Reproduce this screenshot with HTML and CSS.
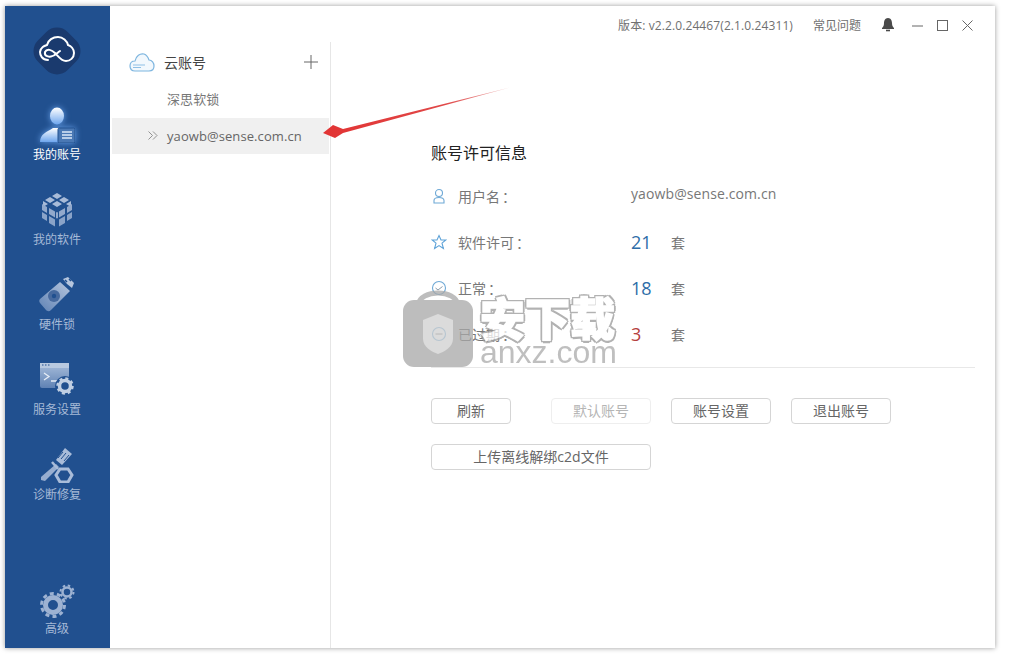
FILE: index.html
```html
<!DOCTYPE html>
<html lang="zh-CN">
<head>
<meta charset="utf-8">
<title>账号许可信息</title>
<link rel="stylesheet" href="styles.css">
</head>
<body>
<div class="window">
  <aside class="sidebar">
    <div class="logo">
      <svg width="48" height="48" viewBox="0 0 48 48"><rect x="3" y="3" width="42" height="42" rx="15" transform="rotate(45 24 24)" fill="#1a3a6e"/><path d="M15 33C9 33 7 28 7 25C8 20 11 19 14 18C15 13 20 10 25 10C30 10 34 14 35 18C38 19 41 22 41 26C41 31 37 34 33 34C28 34 25 29 22 26C19 23 14 21 12 25C11 29 15 30 18 29.500C22 29 24 26 27 24" fill="none" stroke="#fff" stroke-width="2" stroke-linecap="round"/></svg>
    </div>
    <nav class="nav">
      <a class="nav-item active">
        <svg width="36" height="36" viewBox="0 0 36 36"><defs><linearGradient id="u" x1="0" y1="0" x2="0" y2="1"><stop offset="0" stop-color="#fff"/><stop offset="1" stop-color="#6ea6ee"/></linearGradient></defs><ellipse cx="18" cy="9" rx="7" ry="8.500" fill="url(#u)"/><path d="M1 35C1 27 8 25 14 21H22L26 24V35Z" fill="url(#u)"/><rect x="19" y="21" width="17" height="15" rx="1.500" fill="#4a78b4" stroke="#21508f"/><path d="M23 25H33M23 28H33M23 31H33" stroke="#dce8f7" stroke-width="1.400"/></svg>
        <span>我的账号</span>
      </a>
      <a class="nav-item">
        <svg width="36" height="36" viewBox="0 0 36 36"><g fill="#a8bbd8"><path d="M18 1l5 3-5 3-5-3zM11 5l5 3-5 3-5-3zM25 5l5 3-5 3-5-3zM18 9l5 3-5 3-5-3zM4 9l5 3-5 3zM32 9v6l-5-3z"/><path d="M3 12l5 3v6l-5-3zM10 16l6 3.500v6L10 22zM17 20l1 .5 1-.5v6l-1 .5-1-.5zM20 19.500l6-3.500v6l-6 3.500zM28 15l5-3v6l-5 3z" fill="#92a9cc"/><path d="M3 20l5 3v6l-5-3zM10 24l6 3.500v7L10 31zM20 27.500l6-3.500v7l-6 3.500zM28 23l5-3v6l-5 3z" fill="#8aa3c8"/></g></svg>
        <span>我的软件</span>
      </a>
      <a class="nav-item">
        <svg width="36" height="36" viewBox="0 0 36 36"><defs><linearGradient id="k" x1="0" y1="1" x2="1" y2="0"><stop offset="0" stop-color="#5f82b4"/><stop offset="1" stop-color="#b6c6de"/></linearGradient></defs><path d="M1 22L21 5L31 14L12 33C10 35 8 34 7 33L1 26C0 25 0 23 1 22Z" fill="url(#k)"/><path d="M24 2L29 0L35 6L33 11L28 7Z" fill="#b6c6de"/><path d="M26 3l2 2M30 2l2 2" stroke="#21508f" stroke-width="1.500"/><circle cx="15" cy="19" r="6" fill="#46699e"/><circle cx="15" cy="19" r="2.200" fill="#21508f"/></svg>
        <span>硬件锁</span>
      </a>
      <a class="nav-item">
        <svg width="36" height="36" viewBox="0 0 36 36"><defs><linearGradient id="s" x1="0" y1="0" x2="0" y2="1"><stop offset="0" stop-color="#a9bedb"/><stop offset="1" stop-color="#5f82b4"/></linearGradient></defs><rect x="1" y="1" width="29" height="25" rx="2" fill="url(#s)"/><rect x="1" y="1" width="29" height="5" fill="#b8c9e0"/><path d="M3 3h1.500M6 3h1.500M9 3h1.500" stroke="#21508f" stroke-width="1.200"/><path d="M5 11l5 3.500-5 3.500M12 19h7" fill="none" stroke="#e6edf6" stroke-width="1.300"/><circle cx="26" cy="24" r="10" fill="#21508f"/><circle cx="26" cy="24" r="5.500" fill="none" stroke="#c0cfe3" stroke-width="3.500"/><circle cx="26" cy="24" r="7.500" fill="none" stroke="#c0cfe3" stroke-width="2.500" stroke-dasharray="3 2.900"/></svg>
        <span>服务设置</span>
      </a>
      <a class="nav-item">
        <svg width="36" height="36" viewBox="0 0 36 36"><path d="M26 1L33 7L23 18L17 13Z" fill="#a9bcd9"/><path d="M24 5l-5 6M27 6l-5 6M30 8l-5 6" stroke="#21508f"/><path d="M17 17l3 3L6 34l-4-1v-3z" fill="#98aed0"/><path d="M13 15l6 7" stroke="#a9bcd9" stroke-width="2.500"/><path d="M21 22h8l4 6-4 7h-8l-4-7z" fill="#21508f" stroke="#a9bcd9" stroke-width="3"/></svg>
        <span>诊断修复</span>
      </a>
    </nav>
    <a class="nav-item advanced">
      <svg width="36" height="36" viewBox="0 0 36 36"><circle cx="14" cy="22" r="7.500" fill="none" stroke="#9db2d2" stroke-width="5"/><circle cx="14" cy="22" r="11.500" fill="none" stroke="#9db2d2" stroke-width="3" stroke-dasharray="4 3.230"/><circle cx="28" cy="9" r="4.500" fill="none" stroke="#9db2d2" stroke-width="2.500"/><circle cx="28" cy="9" r="6.500" fill="none" stroke="#9db2d2" stroke-width="2" stroke-dasharray="2.500 2.600"/></svg>
      <span>高级</span>
    </a>
  </aside>
  <div class="main">
    <header class="titlebar">
      <span class="version">版本: v2.2.0.24467(2.1.0.24311)</span>
      <span class="faq">常见问题</span>
      <svg class="bell" width="14" height="16" viewBox="0 0 14 16"><path d="M7 1C4 1 3 4 3 6C3 9 2 10 1 11V12H13V11C12 10 11 9 11 6C11 4 10 1 7 1Z" fill="#4a4a4a"/><path d="M5 13.500h4" stroke="#4a4a4a" stroke-width="1.600"/></svg>
      <div class="controls">
        <svg width="11" height="11" viewBox="0 0 11 11"><path d="M0 6H11" stroke="#666"/></svg>
        <svg width="11" height="11" viewBox="0 0 11 11"><rect x=".5" y=".5" width="10" height="10" fill="none" stroke="#666"/></svg>
        <svg width="11" height="11" viewBox="0 0 11 11"><path d="M.5 .5L10.500 10.500M10.500 .5L.5 10.500" stroke="#666"/></svg>
      </div>
    </header>
    <div class="body">
      <section class="tree">
        <div class="tree-head">
          <svg width="26" height="20" viewBox="0 0 26 20"><path d="M6 19C3 19 1 17 1 14C1 11 3 9 6 9C7 4 11 1 15 2C18 3 19 5 20 8C23 8 25 11 25 14C25 17 23 19 20 19Z" fill="#f2f8fd" stroke="#7db5df" stroke-width="1.200"/><path d="M4 13h12M4 15.500h8" stroke="#8fc0e6"/></svg>
          <span class="tree-title">云账号</span>
          <svg class="plus" width="14" height="14" viewBox="0 0 14 14"><path d="M7 0V14M0 7H14" stroke="#666"/></svg>
        </div>
        <div class="tree-row group">深思软锁</div>
        <div class="tree-row selected">
          <svg class="chev" width="10" height="9" viewBox="0 0 10 9"><path d="M.5 .5L4.500 4.500L.5 8.500M5 .5L9 4.500L5 8.500" fill="none" stroke="#888" stroke-width=".9"/></svg>
          yaowb@sense.com.cn
        </div>
      </section>
      <section class="content">
        <h2 class="heading">账号许可信息</h2>
        <div class="info-row">
          <svg class="info-icon" width="16" height="16" viewBox="0 0 16 16"><circle cx="8" cy="5" r="3.500" fill="none" stroke="#6fa9d6" stroke-width="1.100"/><path d="M3 15V12.500C3 10.500 5 9.500 8 9.500C11 9.500 13 10.500 13 12.500V15Z" fill="none" stroke="#6fa9d6" stroke-width="1.100"/></svg>
          <span class="info-label">用户名<span class="colon">：</span></span>
          <span class="info-mail">yaowb@sense.com.cn</span>
        </div>
        <div class="info-row">
          <svg class="info-icon" width="16" height="16" viewBox="0 0 16 16"><path d="M8 1.500L10 6H14.800L11 9.200L12.400 14.500L8 11.600L3.600 14.500L5 9.200L1.200 6H6Z" fill="none" stroke="#5fa3d8" stroke-width="1.100"/></svg>
          <span class="info-label">软件许可<span class="colon">：</span></span>
          <span class="info-num blue">21</span><span class="info-unit">套</span>
        </div>
        <div class="info-row">
          <svg class="info-icon" width="16" height="16" viewBox="0 0 16 16"><circle cx="8" cy="8" r="6.500" fill="none" stroke="#6fa9d6" stroke-width="1.100"/><path d="M4.500 8L7 10L11.500 6.500" fill="none" stroke="#8a9aa8"/></svg>
          <span class="info-label">正常<span class="colon">：</span></span>
          <span class="info-num blue">18</span><span class="info-unit">套</span>
        </div>
        <div class="info-row">
          <svg class="info-icon" width="16" height="16" viewBox="0 0 16 16"><circle cx="8" cy="8" r="6.500" fill="none" stroke="#6fa9d6" stroke-width="1.100"/><path d="M4.500 8H11.500" stroke="#777"/></svg>
          <span class="info-label">已过期<span class="colon">：</span></span>
          <span class="info-num red">3</span><span class="info-unit">套</span>
        </div>
        <div class="actions">
          <button class="btn btn-short">刷新</button>
          <button class="btn btn-disabled">默认账号</button>
          <button class="btn">账号设置</button>
          <button class="btn">退出账号</button>
        </div>
        <div class="actions-second">
          <button class="btn btn-wide">上传离线解绑c2d文件</button>
        </div>
      </section>
    </div>
  </div>
  <svg class="arrow" width="200" height="60" viewBox="0 0 200 60"><defs><linearGradient id="a" x1="0" y1="0" x2="1" y2="0"><stop offset="0" stop-color="#e23333"/><stop offset=".65" stop-color="#e04848"/><stop offset="1" stop-color="#eebcbc"/></linearGradient></defs><path d="M194 6L25 48L15 44L5 52L17 57L25 52Z" fill="url(#a)"/></svg>
  <div class="watermark">
    <svg class="wm-bag" width="72" height="84" viewBox="0 0 72 84"><path d="M16 20C18 4 54 4 56 20" fill="none" stroke="#a8a8a8" stroke-width="5"/><rect x="1" y="15" width="70" height="67" rx="11" fill="#a8a8a8"/><path d="M21 35L36 29L51 35V54C51 62 42 67 36 69C30 67 21 62 21 54Z" fill="#cfcfcf"/></svg>
    <div class="wm-text">
      <div class="wm-cn">安下载</div>
      <div class="wm-en">anxz.com</div>
    </div>
  </div>
</div>
</body>
</html>
```

FILE: styles.css
```css
* { box-sizing: border-box; }
html, body { margin: 0; height: 100%; background: #fff; overflow: hidden; }
body { font-family: "Open Sans", "Noto Sans CJK SC", sans-serif; color: #666; }

.window {
  position: relative;
  display: flex;
  width: 990px;
  height: 642px;
  margin: 6px 0 0 5px;
  background: #fff;
  box-shadow: 0 0 5px rgba(0, 0, 0, .4);
}

.sidebar {
  flex: none;
  width: 105px;
  padding-right: 1px;
  display: flex;
  flex-direction: column;
  background: #21508f;
}
.logo { height: 94px; padding: 21px 0 0 28px; }
.logo svg { display: block; }
.nav { display: flex; flex-direction: column; }
.nav-item {
  height: 85px;
  padding-top: 7px;
  display: flex;
  flex-direction: column;
  align-items: center;
  font-size: 12px;
  line-height: 20px;
  color: #a6bad7;
}
.nav-item svg { display: block; margin-bottom: 2px; }
.nav-item.active { color: #fff; }
.nav-item.active svg { filter: drop-shadow(0 0 3px rgba(120, 180, 255, .8)); }
.nav-item.advanced { height: auto; margin-top: auto; padding: 0 0 9px; }
.nav-item.advanced svg { margin-bottom: 0; }

.main { flex: 1; display: flex; flex-direction: column; min-width: 0; }
.titlebar {
  flex: none;
  height: 36px;
  padding: 2px 22px 0 0;
  display: flex;
  align-items: center;
  justify-content: flex-end;
  font-size: 12px;
  color: #707070;
}
.version { letter-spacing: .1px; }
.faq { margin-left: 20px; }
.bell { margin-left: 20px; }
.controls { display: flex; gap: 14px; margin-left: 17px; }
.controls svg { display: block; }

.body { flex: 1; display: flex; min-height: 0; }
.tree {
  flex: none;
  width: 221px;
  padding: 2px 1px 0 2px;
  border-right: 1px solid #e6e6e6;
}
.tree-head {
  height: 36px;
  margin-bottom: 2px;
  display: flex;
  align-items: center;
  padding: 0 11px 0 17px;
}
.tree-title { margin-left: 9px; font-size: 14px; color: #444; }
.plus { margin-left: auto; }
.tree-row {
  position: relative;
  height: 36px;
  padding-left: 55px;
  display: flex;
  align-items: center;
  font-size: 13px;
  letter-spacing: .08px;
  color: #777;
}
.tree-row.group { padding-bottom: 4px; }
.tree-row.selected { background: #f0f0f0; color: #666; }
.chev { position: absolute; left: 36px; top: 13px; }

.content { flex: 1; padding: 0 20px 0 100px; min-width: 0; }
.heading {
  margin: 100px 0 0;
  height: 22px;
  font-size: 16px;
  line-height: 22px;
  font-weight: 400;
  color: #222;
}
.info-row {
  height: 46px;
  display: flex;
  align-items: center;
  font-size: 14px;
  color: #777;
}
.info-row:first-of-type { margin-top: 9px; }
.info-icon { flex: none; width: 16px; margin-right: 11px; }
.info-label { width: 173px; white-space: nowrap; }
.colon { font-family: "Noto Sans CJK TC", sans-serif; margin-left: 2px; }
.info-mail { font-size: 14px; letter-spacing: .1px; color: #777; margin-top: -6px; }
.info-num { width: 40px; font-size: 18px; }
.info-num.blue { color: #2d6da8; }
.info-num.red { color: #b5403f; }
.info-unit { color: #777; }

.actions {
  display: flex;
  gap: 20px;
  margin-top: 10px;
  padding-top: 30px;
  border-top: 1px solid #e8e8e8;
}
.actions-second { margin-top: 20px; }
.btn {
  width: 100px;
  height: 26px;
  padding: 0;
  background: #fff;
  border: 1px solid #d5d5d5;
  border-radius: 4px;
  font: inherit;
  font-size: 14px;
  line-height: 24px;
  color: #666;
}
.btn-short { width: 80px; margin-right: 20px; }
.btn-disabled { color: #b5b5b5; border-color: #eeeeee; }
.btn-wide { width: 220px; }

.arrow { position: absolute; left: 313px; top: 75px; pointer-events: none; }

.watermark {
  position: absolute;
  left: 397px;
  top: 279px;
  display: flex;
  gap: 6px;
  opacity: .75;
  pointer-events: none;
}
.wm-bag { display: block; }
.wm-text { margin-top: 8px; }
.wm-cn {
  font-family: "Noto Sans CJK SC", sans-serif;
  font-size: 45px;
  line-height: 48px;
  font-weight: 900;
  color: #fff;
  -webkit-text-stroke: 1.5px #fff;
  text-shadow: 2.5px 0 #999, -2.5px 0 #999, 0 2.5px #999, 0 -2.5px #999, 2px 2px #999, -2px -2px #999, 2px -2px #999, -2px 2px #999;
}
.wm-en {
  margin-top: -6px;
  font-family: "Liberation Sans", sans-serif;
  font-size: 32px;
  line-height: 34px;
  color: #aaa;
}
```
